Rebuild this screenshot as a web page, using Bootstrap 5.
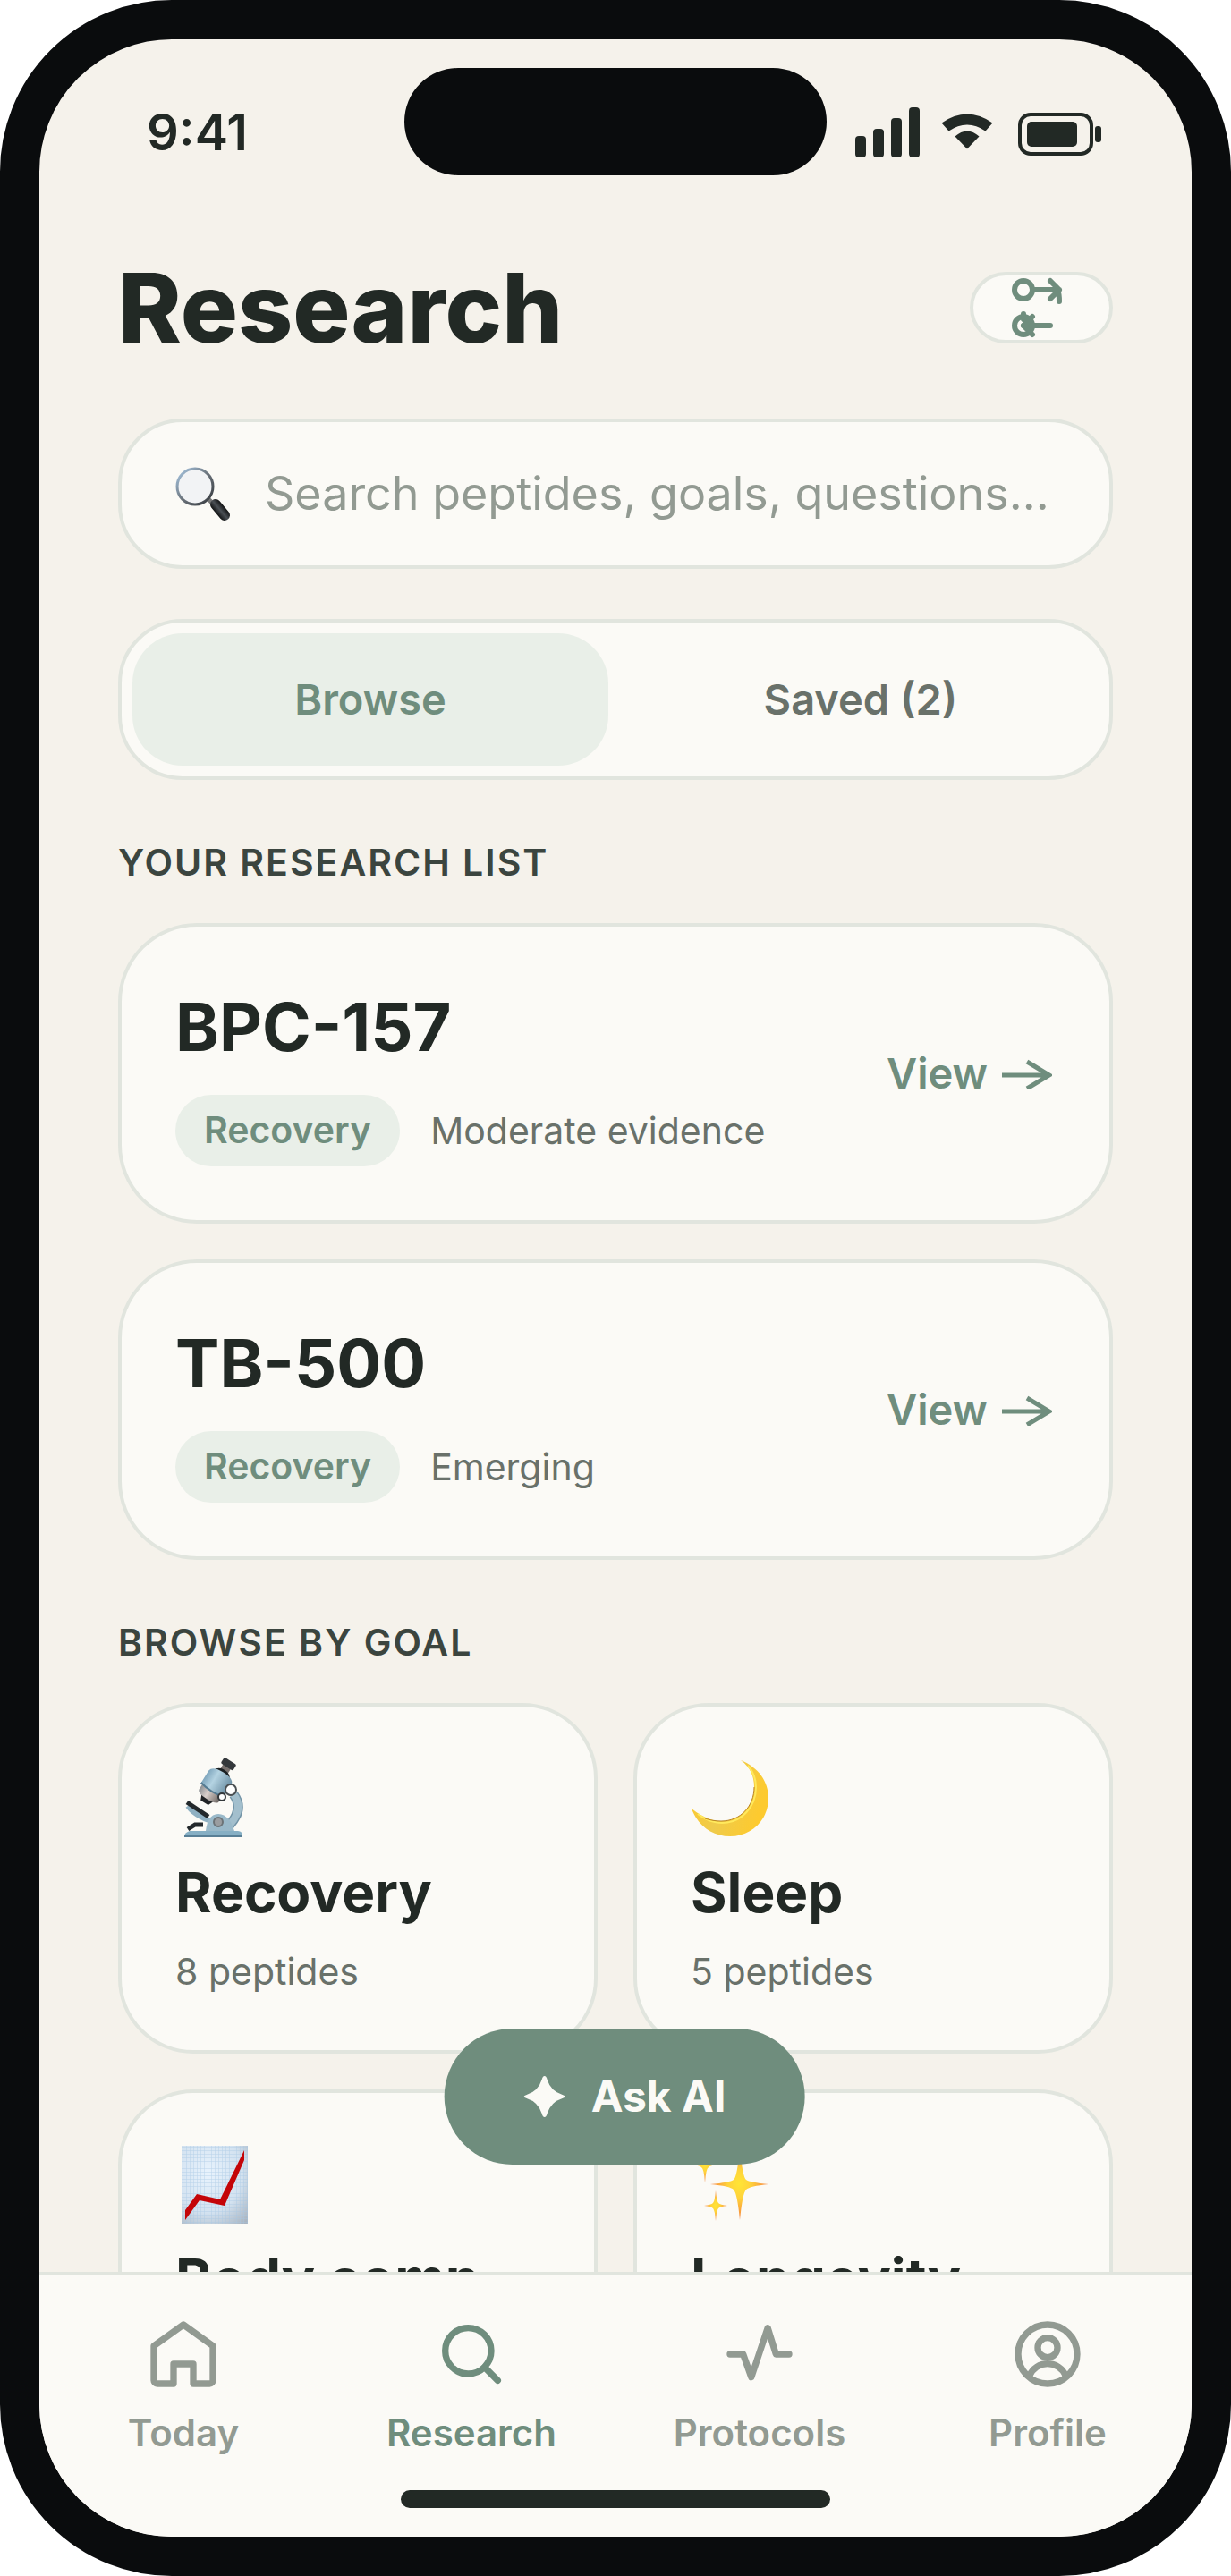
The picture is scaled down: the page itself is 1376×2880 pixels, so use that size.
<!DOCTYPE html>
<html lang="en">
<head>
<meta charset="utf-8">
<meta name="viewport" content="width=device-width, initial-scale=1">
<title>Research</title>
<link href="https://cdn.jsdelivr.net/npm/bootstrap@5.3.0/dist/css/bootstrap.min.css" rel="stylesheet">
<style>
:root{--ink:#222925;--muted:#69716a;--faint:#929a92;--sage:#6f8d7d;--mint:#e9efe8;--line:#e1e5de;--paper:#fbfaf6;--sand:#f5f2eb;--shell:#0a0c0d}
body{font-family:Inter,"Liberation Sans",sans-serif;color:var(--ink);background:#fff}
.phone{height:100vh;background:var(--sand);border:44px solid var(--shell);border-radius:192px;overflow:hidden}
.status-bar{padding-top:32px}
.status-side{flex:1 1 0;min-width:0;padding-top:24px}
.clock{font-size:56px;line-height:64px;font-weight:600}
.clock span{margin-left:120px}
.island{width:472px;height:120px;border-radius:60px;background:var(--shell)}
.signals svg{margin-left:32px}
.content{padding:0 88px}
.title-row{margin-top:88px;margin-bottom:64px}
.page-title{font-size:107px;line-height:120px;font-weight:800}
.panel{background:var(--paper);border:4px solid var(--line)}
.filter-btn{width:160px;height:80px;border-radius:40px}
.search-box{height:168px;border-radius:72px;padding:0 60px;gap:36px;margin-bottom:56px}
.search-box input{font-size:52px;line-height:72px;color:var(--ink);outline:0;min-width:0}
.search-box input::placeholder{color:var(--faint);opacity:1}
.segment{height:180px;border-radius:72px;padding:12px;gap:16px}
.segment button{font-size:47px;font-weight:600;border-radius:56px;color:var(--muted)}
.segment button.active{background:var(--mint);color:var(--sage)}
.section-title{font-size:41px;line-height:56px;font-weight:600;letter-spacing:2px;color:#3b453f;margin:64px 0 40px}
.stack{gap:40px}
.item-card{border-radius:88px;padding:60px}
.item-name{font-size:74px;line-height:104px;font-weight:700;margin-bottom:24px}
.tag-row{gap:34px}
.pill{height:80px;border-radius:40px;padding:0 32px;background:var(--mint);color:var(--sage);font-size:41px;font-weight:600}
.meta{font-size:41px;line-height:56px;color:var(--muted)}
.view-link{font-size:47px;line-height:64px;font-weight:600;color:var(--sage)}
.goal-grid{display:grid;grid-template-columns:1fr 1fr;gap:40px}
.goal-card{border-radius:84px;padding:60px;gap:16px;color:var(--ink)}
.goal-name{font-size:62px;line-height:88px;font-weight:700}
.goal-card svg{overflow:visible}
.ask-btn{left:calc(50% + 10px);bottom:416px;transform:translateX(-50%);height:152px;border-radius:76px;padding:0 88px;gap:28px;background:var(--sage);color:var(--paper);font-size:48px;font-weight:700}
.tab-bar{background:var(--paper);border-top:4px solid var(--line);padding:44px 0 32px}
.tab-link{gap:16px;font-size:42px;line-height:56px;font-weight:600;color:var(--faint)}
.tab-link.active{color:var(--sage)}
.home-bar{width:480px;height:20px;border-radius:10px;background:var(--ink);margin-top:36px}
svg{display:block;flex:none}
.stroked{fill:none;stroke:currentColor;stroke-width:2;stroke-linecap:round;stroke-linejoin:round}
</style>
</head>
<body>
<div class="phone d-flex flex-column">
  <header class="status-bar d-flex align-items-center">
    <div class="status-side clock"><span>9:41</span></div>
    <div class="island"></div>
    <div class="status-side signals">
      <svg width="276" height="56" viewBox="0 0 276 56" fill="#222925" role="img" aria-label="Signal, Wi-Fi and battery">
        <rect y="32" width="12" height="24" rx="4"/><rect x="20" y="24" width="12" height="32" rx="4"/><rect x="40" y="12" width="12" height="44" rx="4"/><rect x="60" width="12" height="56" rx="4"/>
        <path d="M96.500 17.500Q125-2.500 153.500 17.500L145.500 26.500Q125 12.500 104.500 26.500Z"/><path d="M111.500 32.500Q125 20.500 138.500 32.500L125 46.500Z"/>
        <rect x="184" y="8" width="80" height="44" rx="12" fill="none" stroke="#222925" stroke-width="4"/><rect x="192" y="16" width="56" height="28" rx="5"/><rect x="268" y="21" width="7" height="18" rx="3"/>
      </svg>
    </div>
  </header>

  <main class="content flex-grow-1 overflow-hidden">
    <div class="title-row d-flex align-items-center justify-content-between">
      <h1 class="page-title m-0">Research</h1>
      <button class="panel filter-btn d-flex align-items-center justify-content-center p-0" type="button" aria-label="Filters">
        <svg width="152" height="72" viewBox="0 0 152 72" fill="none" stroke="#6f8d7d" stroke-width="6" stroke-linecap="round" stroke-linejoin="round"><circle cx="56" cy="16" r="10"/><path d="M66 16H96M86 6l10 10-10 10M94 16q2 4 2 13"/><circle cx="56" cy="56" r="10"/><path d="M86 56H56M56 43v6l10 7"/><path d="M66 46L56 56l10 10z" fill="#6f8d7d" stroke="none"/><path d="M66 46L56 56l10 10"/></svg>
      </button>
    </div>

    <label class="panel search-box d-flex align-items-center">
      <svg width="64" height="64" viewBox="0 0 64 64" aria-hidden="true">
        <defs><linearGradient id="rim" x2="1" y2="1"><stop stop-color="#a9c9e6"/><stop offset=".5" stop-color="#6b737b"/><stop offset="1" stop-color="#33373b"/></linearGradient><linearGradient id="grip" x1="0" y1="1" x2="1" y2="0"><stop stop-color="#000"/><stop offset=".5" stop-color="#4b5055"/><stop offset="1" stop-color="#000"/></linearGradient></defs>
        <path d="M36 37l7 7" stroke="#777" stroke-width="5"/><circle cx="22" cy="24" r="20" fill="#f2f3f5" stroke="url(#rim)" stroke-width="3"/><path d="M45 44L55 56" stroke="url(#grip)" stroke-width="12" stroke-linecap="round"/>
      </svg>
      <input class="flex-grow-1 border-0 bg-transparent p-0" type="text" placeholder="Search peptides, goals, questions..." aria-label="Search">
    </label>

    <div class="panel segment d-flex">
      <button class="active border-0 flex-fill w-50" type="button">Browse</button>
      <button class="border-0 bg-transparent flex-fill w-50" type="button">Saved (2)</button>
    </div>

    <h2 class="section-title">YOUR RESEARCH LIST</h2>
    <div class="stack d-flex flex-column">
      <article class="panel item-card d-flex align-items-center justify-content-between">
        <div><h3 class="item-name">BPC-157</h3><div class="tag-row d-flex align-items-center"><span class="pill d-flex align-items-center">Recovery</span><span class="meta">Moderate evidence</span></div></div>
        <a class="view-link text-decoration-none d-flex align-items-center" href="#">View <svg class="ms-3 me-1" width="56" height="36" viewBox="0 0 56 36"><path d="M0 20H52M28 5L53 20L28 35" fill="none" stroke="currentColor" stroke-width="5"/></svg></a>
      </article>
      <article class="panel item-card d-flex align-items-center justify-content-between">
        <div><h3 class="item-name">TB-500</h3><div class="tag-row d-flex align-items-center"><span class="pill d-flex align-items-center">Recovery</span><span class="meta">Emerging</span></div></div>
        <a class="view-link text-decoration-none d-flex align-items-center" href="#">View <svg class="ms-3 me-1" width="56" height="36" viewBox="0 0 56 36"><path d="M0 20H52M28 5L53 20L28 35" fill="none" stroke="currentColor" stroke-width="5"/></svg></a>
      </article>
    </div>

    <h2 class="section-title">BROWSE BY GOAL</h2>
    <div class="goal-grid">
      <a class="panel goal-card d-flex flex-column text-decoration-none" href="#">
        <svg width="88" height="88" viewBox="0 0 88 88" aria-hidden="true">
          <defs><linearGradient id="steel" x2="1"><stop stop-color="#7fa6bd"/><stop offset=".35" stop-color="#b4d3e2"/><stop offset="1" stop-color="#6b8ea3"/></linearGradient><linearGradient id="lens" x2="1"><stop stop-color="#8c9094"/><stop offset=".4" stop-color="#d9cfca"/><stop offset="1" stop-color="#6d6663"/></linearGradient></defs>
          <path d="M65 38Q77 54 61 72" fill="none" stroke="#7394a7" stroke-width="11"/><path d="M65 38Q77 54 61 72" fill="none" stroke="#a3bfcd" stroke-width="8"/>
          <path d="M14 51Q22 62 40 68" fill="none" stroke="#8fb0c2" stroke-width="6"/><path d="M13 47L37 63" stroke="#23282b" stroke-width="5"/>
          <path d="M14 77L22 72L31 72" fill="none" stroke="#23282b" stroke-width="5"/>
          <path d="M34 79Q36 60 48 60Q60 60 66 79Z" fill="#9ab9c9"/><circle cx="48" cy="69" r="5" fill="#9a9da0" stroke="#6c7377" stroke-width="2"/>
          <path d="M16 79H70Q75 79 75 85H10Q10 81 16 79Z" fill="#86afc4"/><path d="M10 85H75" stroke="#587f96" stroke-width="2"/>
          <g transform="translate(59 5) rotate(32)"><path d="M-8 43H8L5 50H-5Z" fill="#202325"/><rect x="-5" y="0" width="10" height="12" fill="#77706d"/><rect x="-8" y="-5" width="16" height="8" rx="2" fill="#34383b"/><path d="M-11 14Q-8 7 0 7Q8 7 11 14Z" fill="#1c2022"/><path d="M-15 17Q-14 10 0 10Q14 10 15 17V34H-15Z" fill="url(#steel)"/><path d="M-13 34H13V41Q12 45 0 45Q-12 45-13 41Z" fill="url(#lens)"/><path d="M-15 33Q0 37 15 33" fill="none" stroke="#557b92" stroke-width="2"/></g>
          <circle cx="62" cy="33" r="6" fill="#fff" stroke="#4a4f52" stroke-width="2"/><circle cx="52" cy="41" r="4" fill="#fff" stroke="#34383b" stroke-width="2"/>
        </svg>
        <span class="goal-name">Recovery</span><span class="meta">8 peptides</span>
      </a>
      <a class="panel goal-card d-flex flex-column text-decoration-none" href="#">
        <svg width="88" height="88" viewBox="0 0 88 88" aria-hidden="true">
          <defs><linearGradient id="moon" x2="1" y2=".3"><stop stop-color="#ffc928"/><stop offset=".5" stop-color="#efcb4b"/><stop offset="1" stop-color="#fdca2f"/></linearGradient></defs>
          <path d="M56 0C76 8 87 24 87 42C87 67 68 85 44 85C24 85 8 73 1 54C14 64 24 68 34 68C56 68 71 51 71 30C71 18 67 8 56 0Z" fill="url(#moon)"/>
          <path d="M8 60C16 66 26 70 35 70C57 70 73 52 73 30C73 22 70 13 64 6" fill="none" stroke="#ffe95c" stroke-width="2"/><path d="M16 65C22 67 28 68 34 68C56 68 71 51 71 30" fill="none" stroke="#b98524" stroke-width="1"/>
        </svg>
        <span class="goal-name">Sleep</span><span class="meta">5 peptides</span>
      </a>
      <a class="panel goal-card d-flex flex-column text-decoration-none" href="#">
        <svg width="88" height="88" viewBox="0 0 88 88" aria-hidden="true">
          <defs><radialGradient id="sheet" cx=".4" cy=".35" r=".85"><stop stop-color="#e8f3fd"/><stop offset=".6" stop-color="#d3e2f0"/><stop offset="1" stop-color="#a9b4c0"/></radialGradient><pattern id="ruling" width="4" height="4" patternUnits="userSpaceOnUse"><path d="M0 0H4M0 0V4" stroke="#a5c6e4" stroke-width="1" opacity=".7"/></pattern></defs>
          <path d="M7-1H81V86H7Z" fill="url(#sheet)"/><path d="M7-1H81V86H7Z" fill="url(#ruling)"/>
          <path d="M11 71L24 53L50 59L77 4V15L55 66L27 60L11 82Z" fill="#c40508"/>
        </svg>
        <span class="goal-name">Body comp</span>
      </a>
      <a class="panel goal-card d-flex flex-column text-decoration-none" href="#">
        <svg width="88" height="88" viewBox="0 0 88 88" aria-hidden="true">
          <defs><radialGradient id="spark"><stop stop-color="#ffe535"/><stop offset=".4" stop-color="#ffd23b"/><stop offset="1" stop-color="#f67f3c"/></radialGradient></defs>
          <g fill="url(#spark)"><path d="M55 1Q58 34 62 37Q66 40 87 42Q66 44 62 48Q58 52 55 82Q52 52 48 48Q44 44 22 42Q44 40 48 37Q52 34 55 1Z"/><path d="M28 49Q29 61 31 63Q33 65 41 66Q33 67 31 69Q29 71 28 83Q27 71 25 69Q23 67 15 66Q23 65 25 63Q27 61 28 49Z"/><path d="M16 0Q17 15 20 17Q22 19 30 20Q22 21 20 23Q17 25 16 40Q15 25 12 23Q10 21 2 20Q10 19 12 17Q15 15 16 0Z"/></g>
        </svg>
        <span class="goal-name">Longevity</span>
      </a>
    </div>
  </main>

  <div class="position-relative">
    <button class="ask-btn position-absolute border-0 d-flex align-items-center text-nowrap" type="button">
      <svg width="48" height="48" viewBox="0 0 48 48" fill="currentColor"><path d="M24 1Q26 1 27 5Q31 18 44 22Q47 23 47 24Q47 25 44 26Q31 30 27 43Q26 47 24 47Q22 47 21 43Q17 30 4 26Q1 25 1 24Q1 23 4 22Q17 18 21 5Q22 1 24 1Z"/></svg>Ask AI
    </button>
    <nav class="tab-bar">
      <div class="d-flex">
        <a class="tab-link w-25 d-flex flex-column align-items-center text-decoration-none" href="#"><svg class="stroked" width="88" height="88" viewBox="0 0 24 24"><path d="M3 9.500L12 3l9 6.500V20a1 1 0 0 1-1 1h-5v-6H9v6H4a1 1 0 0 1-1-1z"/></svg>Today</a>
        <a class="tab-link active w-25 d-flex flex-column align-items-center text-decoration-none" href="#" aria-current="page"><svg class="stroked" width="88" height="88" viewBox="0 0 24 24"><circle cx="11" cy="11" r="7"/><path d="M16 16l4 4"/></svg>Research</a>
        <a class="tab-link w-25 d-flex flex-column align-items-center text-decoration-none" href="#"><svg class="stroked" width="88" height="88" viewBox="0 0 24 24"><path d="M3 12h4l2.500 7l5-15L17 12h4"/></svg>Protocols</a>
        <a class="tab-link w-25 d-flex flex-column align-items-center text-decoration-none" href="#"><svg class="stroked" width="88" height="88" viewBox="0 0 24 24"><circle cx="12" cy="12" r="9"/><circle cx="12" cy="10" r="3"/><path d="M6.500 18.500a6 6 0 0 1 11 0"/></svg>Profile</a>
      </div>
      <div class="home-bar mx-auto"></div>
    </nav>
  </div>
</div>
<script src="https://cdn.jsdelivr.net/npm/bootstrap@5.3.0/dist/js/bootstrap.bundle.min.js"></script>
</body>
</html>
